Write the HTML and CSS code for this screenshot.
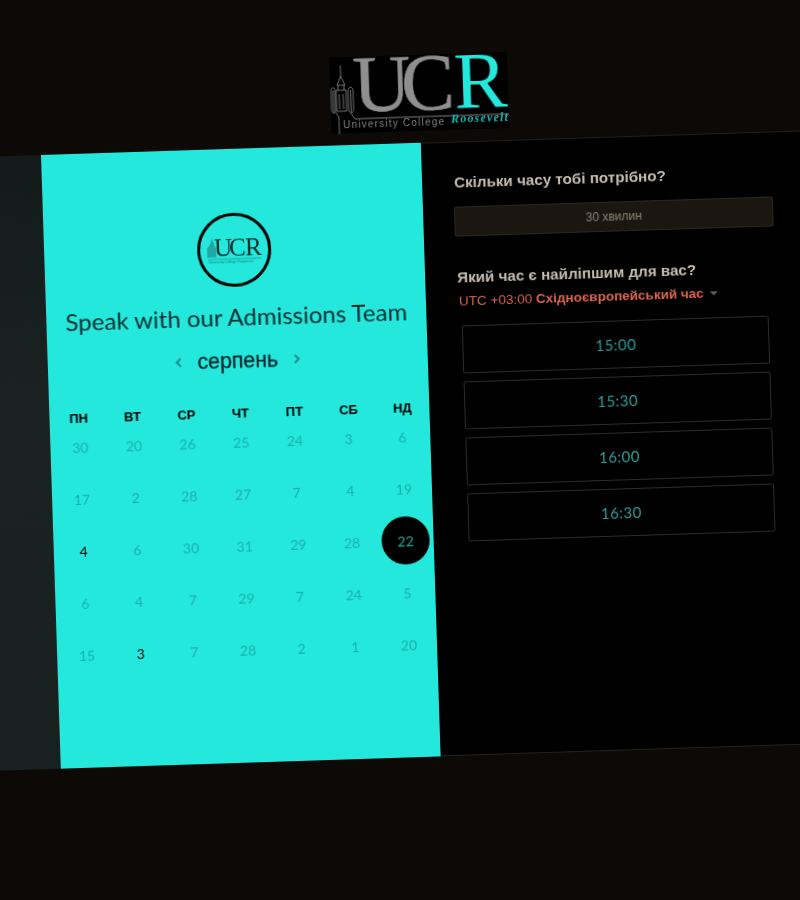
FILE: index.html
```html
<!DOCTYPE html>
<html lang="uk">
  <head>
    <meta charset="UTF-8" />
    <title>Speak with our Admissions Team</title>
    <link rel="stylesheet" href="styles.css">
  </head>
  <body>
    <div class="stage">
      <header class="top">
        <svg class="logo" width="178" height="76" viewBox="0 0 178 76">
          <rect width="178" height="76" fill="#000" />
          <g fill="none" stroke="#8d8d8d" stroke-width="0.8">
            <path d="M11 8V19M11 19L7 28H15L11 19M8 28V33M14 28V33" />
            <path d="M6 33H16V54H6V33M9 37V52M13 37V52" />
            <path d="M1 34C1 29 5 29 5 34V52C5 57 1 57 1 52V34M3 33V55" />
            <path d="M18 34C18 29 23 29 23 34V52C23 57 18 57 18 52V34M20.5 33V55" />
            <path d="M5 55L8 60V77M20 56L24 62" />
            <path d="M24 62H178" stroke-width="0.9" />
          </g>
          <text class="logo-uc" x="23" y="55">UC</text>
          <text class="logo-r" x="124" y="55">R</text>
          <text class="logo-sub" x="12" y="71">University College</text>
          <text class="logo-name" x="120" y="69">Roosevelt</text>
        </svg>
      </header>
      <div class="band">
        <div class="side"></div>
        <section class="left">
          <div class="badge">
            <svg width="56" height="30" viewBox="0 0 56 30">
              <path d="M1 22V13L4 9L6 3L8 9L10 13V22Z" fill="#1fa8a4" />
              <text class="mini-uc" x="8" y="21">UC</text>
              <text class="mini-r" x="39" y="21">R</text>
              <path d="M2 24H55" stroke="#146e6e" stroke-width="0.5" />
              <text class="mini-sub" x="2" y="28">University College Roosevelt</text>
            </svg>
          </div>
          <h1 class="title">Speak with our Admissions Team</h1>
          <div class="month">
            <svg class="arrow" width="10" height="12" viewBox="0 0 10 12"><path d="M7 2L3 6L7 10" /></svg>
            <span class="month-name">серпень</span>
            <svg class="arrow" width="10" height="12" viewBox="0 0 10 12"><path d="M3 2L7 6L3 10" /></svg>
          </div>
          <div class="weekdays">
            <span>Пн</span><span>Вт</span><span>Ср</span><span>Чт</span><span>Пт</span><span>Сб</span><span>Нд</span>
          </div>
          <div class="days">
            <span>30</span><span>20</span><span>26</span><span>25</span><span>24</span><span>3</span><span>6</span>
            <span>17</span><span>2</span><span>28</span><span>27</span><span>7</span><span>4</span><span>19</span>
            <span class="open">4</span><span>6</span><span>30</span><span>31</span><span>29</span><span>28</span><span class="today">22</span>
            <span>6</span><span>4</span><span>7</span><span>29</span><span>7</span><span>24</span><span>5</span>
            <span>15</span><span class="open">3</span><span>7</span><span>28</span><span>2</span><span>1</span><span>20</span>
          </div>
        </section>
        <section class="right">
          <h2 class="ask">Скільки часу тобі потрібно?</h2>
          <div class="duration">30 хвилин</div>
          <h2 class="ask ask-time">Який час є найліпшим для вас?</h2>
          <div class="zone">UTC +03:00 <b>Східноєвропейський час</b><i class="caret"></i></div>
          <ul class="slots">
            <li>15:00</li>
            <li>15:30</li>
            <li>16:00</li>
            <li>16:30</li>
          </ul>
        </section>
      </div>
    </div>
  </body>
</html>
```

FILE: styles.css
```css
* {
  margin: 0;
  padding: 0;
  box-sizing: border-box;
}

html,
body {
  height: 900px;
  overflow: hidden;
  background-color: #0c0906;
}

.stage {
  width: 1042px;
  margin-left: -100px;
  transform: rotate(-1.85deg);
  transform-origin: 141px 155px;
  filter: blur(0.3px);
}

.top {
  height: 155px;
  padding-top: 67px;
  display: flex;
  justify-content: center;
}

.logo {
  display: block;
  overflow: visible;
}

.logo-uc {
  font-family: "Liberation Serif", serif;
  font-size: 80px;
  letter-spacing: -9.5px;
  fill: #8f8f8f;
  stroke: #8f8f8f;
  stroke-width: 0.6px;
}

.logo-r {
  font-family: "Liberation Serif", serif;
  font-size: 80px;
  fill: #24e8dc;
}

.logo-sub {
  font-family: "Liberation Sans", sans-serif;
  font-size: 10px;
  letter-spacing: 1.2px;
  fill: #808080;
}

.logo-name {
  font-family: "Liberation Serif", serif;
  font-size: 12px;
  font-style: italic;
  font-weight: bold;
  letter-spacing: 1.2px;
  fill: #1fb5ad;
}

.band {
  display: flex;
  height: 614px;
}

.side {
  width: 141px;
  background: linear-gradient(#131a1a, #1a2322 40%, #192120);
}

.left {
  width: 380px;
  padding-top: 64px;
  background-color: #24e8dc;
  display: flex;
  flex-direction: column;
  align-items: center;
}

.badge {
  width: 74px;
  height: 74px;
  border: 3px solid #000;
  border-radius: 50%;
  display: flex;
  align-items: center;
  justify-content: center;
}

.mini-uc {
  font-family: "Liberation Serif", serif;
  font-size: 25px;
  letter-spacing: -3px;
  fill: #062a2c;
}

.mini-r {
  font-family: "Liberation Serif", serif;
  font-size: 25px;
  fill: #062a2c;
}

.mini-sub {
  font-family: "Liberation Sans", sans-serif;
  font-size: 3.5px;
  fill: #117c7c;
}

.title {
  margin-top: 15px;
  font-family: Lato, sans-serif;
  font-size: 24px;
  line-height: 30px;
  font-weight: 400;
  color: #0a2c30;
  white-space: nowrap;
}

.month {
  margin-top: 14px;
  height: 30px;
  width: 128px;
  display: flex;
  align-items: center;
  justify-content: space-between;
}

.month-name {
  font-family: "Liberation Sans", sans-serif;
  font-size: 21.3px;
  color: #06262a;
  -webkit-text-stroke: 0.3px #06262a;
}

.arrow path {
  fill: none;
  stroke: #1b8f92;
  stroke-width: 2;
}

.weekdays {
  margin: 33px 0 -1px;
  width: 100%;
  padding-left: 2px;
  display: grid;
  grid-template-columns: repeat(7, 54px);
  font-family: "Liberation Sans", sans-serif;
  font-size: 13px;
  line-height: 10px;
  font-weight: bold;
  text-align: center;
  text-transform: uppercase;
  color: #000;
}

.days {
  width: 100%;
  padding-left: 3px;
  display: grid;
  grid-template-columns: repeat(7, 53.7px);
  grid-auto-rows: 48px;
  row-gap: 4px;
  font-family: Lato, sans-serif;
  font-size: 14px;
  color: #1ab0ad;
}

.days span {
  display: flex;
  align-items: center;
  justify-content: center;
}

.days .open {
  color: #000;
}

.days .today {
  width: 48px;
  height: 48px;
  justify-self: center;
  border-radius: 50%;
  background-color: #000;
  color: #2aa8a4;
}

.right {
  flex: 1;
  padding: 30px 0 0 32px;
  background-color: #000;
  border-top: 1px solid #221f1a;
  border-bottom: 1px solid #25221c;
}

.ask {
  font-family: "Liberation Sans", sans-serif;
  font-size: 15.2px;
  line-height: 20px;
  font-weight: bold;
  color: #c6bcb0;
}

.duration {
  margin: 14px 0 0 -1px;
  width: 319px;
  height: 30px;
  line-height: 28px;
  text-align: center;
  font-family: "Liberation Sans", sans-serif;
  font-size: 12px;
  color: #8b8577;
  background-color: #1b1710;
  border: 1px solid #2b2821;
  border-radius: 2px;
}

.ask-time {
  margin-top: 31px;
}

.zone {
  margin: 4px 0 0 1px;
  line-height: 20px;
  font-family: "Liberation Sans", sans-serif;
  font-size: 13.5px;
  color: #dc6350;
}

.caret {
  display: inline-block;
  margin-left: 6px;
  vertical-align: middle;
  border-left: 4px solid transparent;
  border-right: 4px solid transparent;
  border-top: 4px solid #6a5d55;
}

.slots {
  list-style: none;
  margin: 14px 0 0 3px;
  width: 307px;
  display: flex;
  flex-direction: column;
  gap: 8px;
}

.slots li {
  height: 48px;
  line-height: 46px;
  text-align: center;
  font-family: Lato, sans-serif;
  font-size: 15px;
  letter-spacing: 0.5px;
  color: #2f9e9a;
  border: 1px solid #2c2c2b;
  border-radius: 2px;
}
```
